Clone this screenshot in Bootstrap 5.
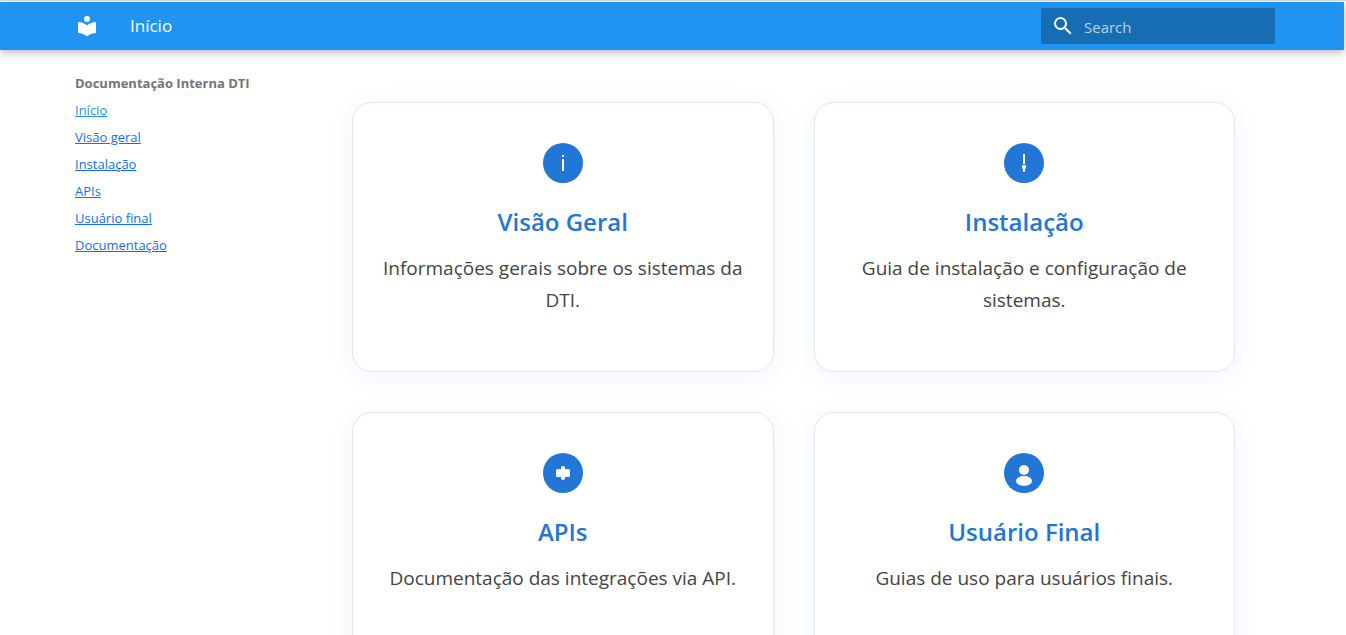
<!DOCTYPE html>
<html lang="pt-BR">
<head>
<meta charset="utf-8">
<meta name="viewport" content="width=device-width, initial-scale=1">
<title>Documentação Interna DTI</title>
<link href="https://cdn.jsdelivr.net/npm/bootstrap@5.3.0/dist/css/bootstrap.min.css" rel="stylesheet">
<style>
  body { font-family: "Segoe UI", "Open Sans", "Noto Sans", sans-serif; background: #fff; }
  .app-shell { height: 100vh; overflow-y: auto; scrollbar-width: none; border-top: 1px solid #d2d6da; padding: 1px 2px 0 0; }
  .app-shell::-webkit-scrollbar { display: none; }
  .page-grid { max-width: 1220px; }
  .topbar { background: #2094f3; height: 48px; box-shadow: 0 0 4px rgba(0,0,0,.1), 0 4px 8px rgba(0,0,0,.2); }
  .home-link { margin-left: 13px; }
  .site-title { font-size: 17px; line-height: 24px; margin-left: 31px; }
  .search-box { width: 234px; height: 36px; background: #176db3; border-radius: 2px; padding-left: 11px; gap: 10px; margin-right: 7px; }
  .search-box input { font-size: 15px; line-height: 24px; padding: 2px 0 0; }
  .search-box input, .search-box input:focus { background: transparent; border: 0; box-shadow: none; color: #fff; }
  .search-box input::placeholder { color: rgba(255,255,255,.7); opacity: 1; }
  .side-nav { width: 290px; padding: 22px 12px 0 13px; font-size: 13px; line-height: 22px; }
  .side-nav strong { color: #757575; }
  .side-nav li { margin-top: 5px; }
  .side-nav a { color: #0d6efd; }
  .side-nav a.active { color: #2094f3; }
  .card-grid { padding: 52px 47px 40px 0; gap: 40px; display: grid; grid-template-columns: 1fr 1fr; grid-auto-rows: minmax(270px, auto); }
  .doc-card { border: 1px solid #e2e7ec; border-radius: 20px; padding: 40px 24px; box-shadow: 0 4px 24px rgba(32,118,214,.08); }
  .doc-card h2 { font-size: 24px; line-height: 32px; font-weight: 600; color: #2176d6; margin: 23px 0 14px; }
  .doc-card p { font-size: 19px; line-height: 32px; color: #444; }
</style>
</head>
<body>
<div class="app-shell">
  <header class="topbar position-relative">
    <div class="page-grid mx-auto h-100 d-flex align-items-center">
      <a href="#" class="home-link d-flex" aria-label="Documentação Interna DTI">
        <svg width="24" height="24" viewBox="0 0 24 24" fill="#fff"><path d="M12 8a3 3 0 0 0 3-3 3 3 0 0 0-3-3 3 3 0 0 0-3 3 3 3 0 0 0 3 3m0 3.540C9.640 9.350 6.500 8 3 8v11c3.500 0 6.640 1.350 9 3.540 2.360-2.190 5.500-3.540 9-3.540V8c-3.500 0-6.640 1.350-9 3.540Z"/></svg>
      </a>
      <span class="site-title text-white">Início</span>
      <form class="search-box d-flex align-items-center ms-auto">
        <svg class="flex-shrink-0" width="22" height="22" viewBox="1 1 22 22" fill="#fff"><path d="M9.500 3A6.500 6.500 0 0 1 16 9.500c0 1.610-.59 3.090-1.560 4.230l.27.27h.79l5 5-1.500 1.500-5-5v-.79l-.27-.27A6.516 6.516 0 0 1 9.500 16 6.500 6.500 0 0 1 3 9.500 6.500 6.500 0 0 1 9.500 3m0 2C7 5 5 7 5 9.500S7 14 9.500 14 14 12 14 9.500 12 5 9.500 5Z"/></svg>
        <input class="form-control" type="text" placeholder="Search" aria-label="Search">
      </form>
    </div>
  </header>
  <div class="page-grid mx-auto d-flex">
    <nav class="side-nav flex-shrink-0">
      <strong>Documentação Interna DTI</strong>
      <ul class="list-unstyled mb-0">
        <li><a class="active" href="#">Início</a></li>
        <li><a href="#">Visão geral</a></li>
        <li><a href="#">Instalação</a></li>
        <li><a href="#">APIs</a></li>
        <li><a href="#">Usuário final</a></li>
        <li><a href="#">Documentação</a></li>
      </ul>
    </nav>
    <main class="card-grid flex-grow-1">
      <article class="card doc-card text-center">
        <svg class="mx-auto" width="40" height="40" viewBox="0 0 40 40"><circle cx="20" cy="20" r="20" fill="#2176d6"/><path d="M19 12h2v2h-2zM19 16h2v12h-2z" fill="#fff"/></svg>
        <h2>Visão Geral</h2>
        <p class="mb-0">Informações gerais sobre os sistemas da DTI.</p>
      </article>
      <article class="card doc-card text-center">
        <svg class="mx-auto" width="40" height="40" viewBox="0 0 40 40"><circle cx="20" cy="20" r="20" fill="#2176d6"/><path d="M19 11h2v10h-2zM19 22h2q1 0 1 1v2l-1 1v2q0 1-1 1t-1-1v-2l-1-1v-2q0-1 1-1" fill="#fff"/></svg>
        <h2>Instalação</h2>
        <p class="mb-0">Guia de instalação e configuração de sistemas.</p>
      </article>
      <article class="card doc-card text-center">
        <svg class="mx-auto" width="40" height="40" viewBox="0 0 40 40"><circle cx="20" cy="20" r="20" fill="#2176d6"/><rect x="13" y="16" width="14" height="8" rx="1.500" fill="#fff"/><rect x="18" y="13" width="4" height="14" rx="2" fill="#fff"/></svg>
        <h2>APIs</h2>
        <p class="mb-0">Documentação das integrações via API.</p>
      </article>
      <article class="card doc-card text-center">
        <svg class="mx-auto" width="40" height="40" viewBox="0 0 40 40"><circle cx="20" cy="20" r="20" fill="#2176d6"/><circle cx="20" cy="17" r="5" fill="#fff"/><ellipse cx="20" cy="28" rx="8" ry="5" fill="#fff"/></svg>
        <h2>Usuário Final</h2>
        <p class="mb-0">Guias de uso para usuários finais.</p>
      </article>
    </main>
  </div>
</div>
<script src="https://cdn.jsdelivr.net/npm/bootstrap@5.3.0/dist/js/bootstrap.bundle.min.js"></script>
</body>
</html>
